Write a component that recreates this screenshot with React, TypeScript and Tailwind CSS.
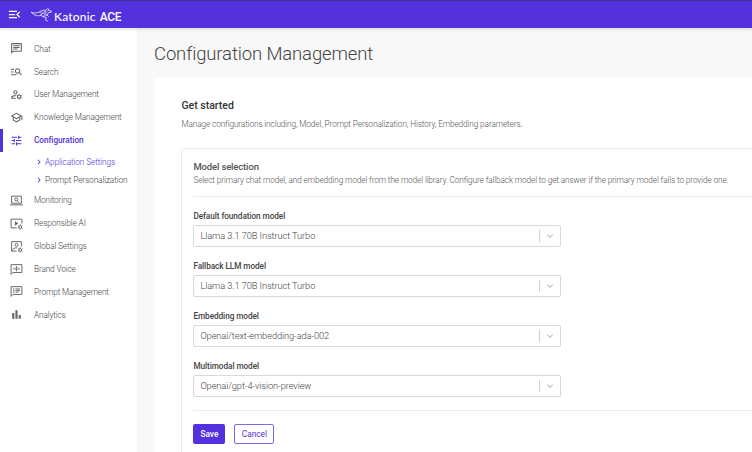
import React from 'react';
import {
  MdMenuOpen, MdOutlineChat, MdManageSearch, MdOutlineManageAccounts, MdOutlineSchool, MdTune,
  MdBarChart, MdKeyboardArrowRight, MdKeyboardArrowDown,
} from 'react-icons/md';

type IconProps = { className?: string };

const gear = (
  <g fill="none" stroke="currentColor" strokeWidth="1.8">
    <circle cx="19" cy="18.5" r="2.6" />
    <path d="M19 14v2M19 21v2M15.1 16.2l1.7 1M21.2 19.8l1.7 1M15.1 20.8l1.7-1M21.2 17.2l1.7-1" />
  </g>
);

function MonitorIcon({ className }: IconProps) {
  return (
    <svg viewBox="0 0 24 24" className={className} fill="none" stroke="currentColor" strokeWidth="1.8">
      <path d="M3 4h18v13H3zM0 20h24" />
      <circle cx="11.5" cy="10" r="2.8" />
      <path d="M13.6 12.1l2.6 2.6" />
    </svg>
  );
}

function ResponsibleIcon({ className }: IconProps) {
  return (
    <svg viewBox="0 0 24 24" className={className}>
      <path d="M12.5 20H2V4h20v8" fill="none" stroke="currentColor" strokeWidth="1.8" />
      <path d="M9 8v8l6.5-4z" fill="currentColor" />
      {gear}
    </svg>
  );
}

function GlobalIcon({ className }: IconProps) {
  return (
    <svg viewBox="0 0 24 24" className={className}>
      <path d="M12.5 20.5H3V3h18v9M4 20c1-4 4-6 9-5.500" fill="none" stroke="currentColor" strokeWidth="1.8" />
      <circle cx="12" cy="9" r="2.8" fill="none" stroke="currentColor" strokeWidth="1.8" />
      {gear}
    </svg>
  );
}

function VoiceIcon({ className }: IconProps) {
  return (
    <svg viewBox="0 0 24 24" className={className} fill="none" stroke="currentColor" strokeWidth="1.8">
      <path d="M2 21V3h20v14.500H5.500z" />
      <path d="M6.500 9.500v2M9.300 8v5M12 5.500v10M14.700 8v5M17.500 9.500v2" strokeWidth="1.5" />
    </svg>
  );
}

function PromptIcon({ className }: IconProps) {
  return (
    <svg viewBox="0 0 24 24" className={className} fill="none" stroke="currentColor" strokeWidth="1.8">
      <path d="M2 21V3h20v14.500H5.500z" />
      <path d="M5.500 7.300h2.500M5.500 10.300h2.500M5.500 13.300h2.500M10 7.300h8.500M10 10.300h8.500M10 13.300h5.500" />
    </svg>
  );
}

function Kangaroo() {
  return (
    <svg viewBox="0 0 66 42" className="h-[14px] w-[22px]" fill="none" stroke="#fff" strokeLinecap="round" strokeLinejoin="round">
      <path d="M1 13c8 4 17 2 24-1 7-5 13-6 19-5l6-5 3 1v4l9 3-2 3-8 1-4 7" strokeWidth="2.2" />
      <path d="M1 13c9 10 19 12 28 9l6-7M29 22l8 4M48 21l4 4M37 26l9 3-3 7 7 3" strokeWidth="2.2" />
      <path d="M25 12l10 3 9-8-2 10-7-2-6 7M42 17l6 4-11 5 5-9 10-10" strokeWidth="1.400" />
    </svg>
  );
}

type Item = { label: string; icon: React.ComponentType<IconProps> };

const topItems: Item[] = [
  { label: 'Chat', icon: MdOutlineChat },
  { label: 'Search', icon: MdManageSearch },
  { label: 'User Management', icon: MdOutlineManageAccounts },
  { label: 'Knowledge Management', icon: MdOutlineSchool },
];

const bottomItems: Item[] = [
  { label: 'Monitoring', icon: MonitorIcon },
  { label: 'Responsible AI', icon: ResponsibleIcon },
  { label: 'Global Settings', icon: GlobalIcon },
  { label: 'Brand Voice', icon: VoiceIcon },
  { label: 'Prompt Management', icon: PromptIcon },
  { label: 'Analytics', icon: MdBarChart },
];

const fields = [
  { label: 'Default foundation model', value: 'Llama 3.1 70B Instruct Turbo' },
  { label: 'Fallback LLM model', value: 'Llama 3.1 70B Instruct Turbo' },
  { label: 'Embedding model', value: 'Openai/text-embedding-ada-002' },
  { label: 'Multimodal model', value: 'Openai/gpt-4-vision-preview' },
];

function NavItem({ label, icon: Icon }: Item) {
  return (
    <a className="flex h-[22.9px] items-center pl-[10px] text-[#666]">
      <Icon className="size-[13px] shrink-0" />
      <span className="ml-[11px] text-[8.25px] font-light tracking-[-0.13px] text-[#444]">{label}</span>
    </a>
  );
}

export default function App() {
  return (
    <div className="flex h-[452px] w-[752px] flex-col overflow-hidden bg-[#f8f8f8] font-['Roboto',sans-serif] whitespace-nowrap">
      <header className="z-10 flex h-[28px] shrink-0 items-center border-t border-[#42358f] bg-[#5331dc] pl-[7px] text-white shadow-[0_1px_3px_rgba(0,0,0,0.15)]">
        <MdMenuOpen className="size-[15px]" />
        <div className="ml-[9px] flex items-center">
          <Kangaroo />
          <span className="mt-[4px] ml-px font-['Lato',sans-serif] text-[12px] leading-[14px] font-medium tracking-[0.2px]">Katonic</span>
          <span className="mt-[4px] ml-[4px] text-[12px] leading-[14px] font-medium tracking-[-0.4px]">ACE</span>
        </div>
      </header>
      <div className="flex min-h-0 flex-1">
        <nav className="w-[137px] shrink-0 bg-white pt-[9.4px]">
          {topItems.map((item) => <NavItem key={item.label} {...item} />)}
          <a className="flex h-[23px] items-center border-l-[3px] border-[#5331dc] pl-[7px] text-[#5331dc]">
            <MdTune className="size-[13px]" />
            <span className="ml-[11px] text-[8.25px] font-medium tracking-[-0.05px]">Configuration</span>
          </a>
          <div className="pt-px">
            <a className="flex h-[18px] items-center pl-[34px] text-[8.25px] font-light tracking-[-0.1px] text-[#5331dc]">
              <MdKeyboardArrowRight className="mr-[1px] size-[10px]" />Application Settings
            </a>
            <a className="flex h-[18px] items-center pl-[34px] text-[8.25px] font-light tracking-[-0.1px] text-[#444]">
              <MdKeyboardArrowRight className="mr-[1px] size-[10px] text-[#5331dc]" />Prompt Personalization
            </a>
          </div>
          {bottomItems.map((item) => <NavItem key={item.label} {...item} />)}
        </nav>
        <main className="min-w-0 flex-1 pt-[14px] pl-[17px]">
          <h1 className="text-[18.5px] leading-[24px] font-light tracking-[-0.13px] text-[#444]">Configuration Management</h1>
          <section className="mt-[12px] h-[400px] bg-white pt-[21px] pl-[27.4px]">
            <h2 className="text-[10.5px] leading-[14px] font-medium text-[#333]">Get started</h2>
            <p className="mt-[5px] text-[8.25px] leading-[12px] font-light tracking-[-0.11px] text-[#555]">Manage configurations including, Model, Prompt Personalization, History, Embedding parameters.</p>
            <div className="mt-[18px] h-[340px] w-[600px] rounded-[4px] border border-[#e9e9e9] pt-[12px] pl-[11px]">
              <h3 className="text-[9.5px] leading-[12px] font-medium tracking-[-0.15px] text-[#555]">Model selection</h3>
              <p className="mt-px text-[8.25px] leading-[12px] font-light tracking-[-0.11px] text-[#555]">Select primary chat model, and embedding model from the model library. Configure fallback model to get answer if the primary model fails to provide one.</p>
              <hr className="mt-[10px] border-[#ececec]" />
              <div className="mt-[13px] flex w-[368px] flex-col gap-[6px]">
                {fields.map((f) => (
                  <label key={f.label} className="block h-[44px]">
                    <span className="block text-[8.25px] leading-[12px] font-medium tracking-[-0.08px] text-[#444]">{f.label}</span>
                    <span className="mt-[3px] flex h-[22px] items-center rounded-[2px] border border-[#d9d9d9] pl-[6px] text-[9.25px] leading-[12px] font-light tracking-[-0.08px] text-[#444]">
                      <span className="flex-1">{f.value}</span>
                      <span className="h-[12px] w-px bg-[#d0d0d0]" />
                      <MdKeyboardArrowDown className="mx-[4px] size-[12px] text-[#bbb]" />
                    </span>
                  </label>
                ))}
              </div>
              <hr className="mt-[6px] border-[#ececec]" />
              <div className="mt-[13px] flex gap-[9px]">
                <button className="h-[20px] w-[32px] rounded-[2px] bg-[#5331dc] text-[8.25px] font-medium text-white">Save</button>
                <button className="h-[20px] w-[40px] rounded-[2px] border border-[#7f69e5] text-[8.25px] text-[#5331dc]">Cancel</button>
              </div>
            </div>
          </section>
        </main>
      </div>
    </div>
  );
}
